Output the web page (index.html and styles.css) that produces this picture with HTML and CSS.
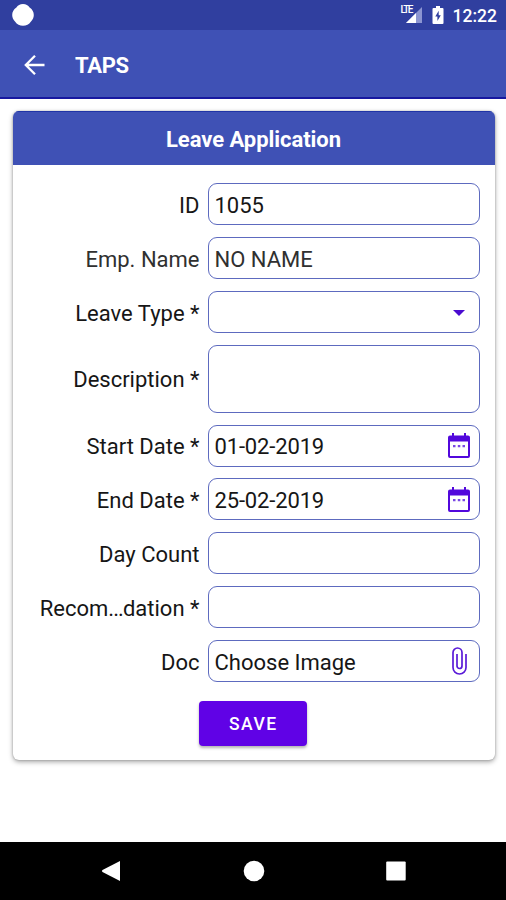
FILE: index.html
```html
<!DOCTYPE html>
<html lang="en">
<head>
<meta charset="utf-8">
<title>TAPS</title>
<link rel="stylesheet" href="styles.css">
</head>
<body>
<div class="status">
  <svg class="notif" viewBox="0 0 24 24"><path d="M12 1C15 1 17.200 2.300 18.600 4.500C21.500 6.500 22.800 9 22.800 12C22.800 14.500 21.800 16.800 20 18.500C18 21.500 15.300 22.800 12 22.800S6 21.500 4 18.500C2.200 16.800 1.200 14.500 1.200 12C1.200 9 2.500 6.500 5.400 4.500C6.800 2.300 9 1 12 1Z" fill="#fff"/></svg>
  <div class="indicators">
    <span class="signal"><span class="lte">LTE</span><svg viewBox="0 0 16 16"><path d="M16 0V16H0Z" fill="#8c95d1"/><path d="M10 6V16H0Z" fill="#fff"/></svg></span>
    <svg class="battery" viewBox="0 0 12 18"><path d="M4 0H8V2H10.500Q11.500 2 11.500 3V17Q11.500 18 10.500 18H1.500Q.5 18 .5 17V3Q.5 2 1.500 2H4Z" fill="#fff"/><path d="M6.700 4.800L3.300 10.500H5.400V15L8.800 9.300H6.700Z" fill="#303f9f"/></svg>
    <span class="clock">12:22</span>
  </div>
</div>
<header class="appbar">
  <svg class="back" viewBox="0 0 22 22"><path d="M20.500 11H2M11 1.800L1.800 11L11 20.200" fill="none" stroke="#fff" stroke-width="2.300"/></svg>
  <h1>TAPS</h1>
</header>
<main>
  <section class="card">
    <h2>Leave Application</h2>
    <form class="form">
      <div class="row"><label>ID</label><div class="field">1055</div></div>
      <div class="row soft"><label>Emp. Name</label><div class="field">NO NAME</div></div>
      <div class="row"><label>Leave Type *</label><div class="field"><svg class="caret" viewBox="0 0 12 6"><path d="M0 0H12L6 6Z" fill="#4a0bd0"/></svg></div></div>
      <div class="row tall"><label>Description *</label><div class="field"></div></div>
      <div class="row"><label>Start Date *</label><div class="field date">01-02-2019<svg class="cal" viewBox="0 0 22 25"><path d="M4 0H6V2.500H16V0H18V2.500H20Q22 2.500 22 4.500V23Q22 25 20 25H2Q0 25 0 23V4.500Q0 2.500 2 2.500H4ZM2 8.500V23H20V8.500Z" fill="#5208dc" fill-rule="evenodd"/><path d="M5 12H7.500V14.200H5ZM9.800 12H12.300V14.200H9.800ZM14.500 12H17V14.200H14.500Z" fill="#7a48e4"/></svg></div></div>
      <div class="row"><label>End Date *</label><div class="field date">25-02-2019<svg class="cal" viewBox="0 0 22 25"><path d="M4 0H6V2.500H16V0H18V2.500H20Q22 2.500 22 4.500V23Q22 25 20 25H2Q0 25 0 23V4.500Q0 2.500 2 2.500H4ZM2 8.500V23H20V8.500Z" fill="#5208dc" fill-rule="evenodd"/><path d="M5 12H7.500V14.200H5ZM9.800 12H12.300V14.200H9.800ZM14.500 12H17V14.200H14.500Z" fill="#7a48e4"/></svg></div></div>
      <div class="row"><label>Day Count</label><div class="field"></div></div>
      <div class="row"><label>Recom<span class="dots">...</span>dation *</label><div class="field"></div></div>
      <div class="row"><label>Doc</label><div class="field">Choose Image<svg class="clip" viewBox="0 0 15 28"><path d="M14 7V20.500A6.500 6.500 0 0 1 1 20.500V5.500A4.500 4.500 0 0 1 10 5.500V19A2.500 2.500 0 0 1 5 19V7" fill="none" stroke="#5a1bd8" stroke-width="1.700"/></svg></div></div>
      <button type="button" class="save">SAVE</button>
    </form>
  </section>
</main>
<nav class="navbar">
  <svg viewBox="0 0 22 22"><path d="M20 1V21L2.500 12Q1.200 11 2.500 10Z" fill="#fff"/></svg>
  <svg viewBox="0 0 22 22"><circle cx="11" cy="11" r="10.300" fill="#fff"/></svg>
  <svg viewBox="0 0 22 22"><rect x="1.200" y="1.600" width="19.500" height="19" rx="1" fill="#fff"/></svg>
</nav>
</body>
</html>
```
FILE: styles.css
```css
* { box-sizing: border-box; }
body {
  margin: 0;
  height: 900px;
  display: flex;
  flex-direction: column;
  background: #fff;
  color: #161616;
  font-family: Roboto, "Liberation Sans", sans-serif;
}
svg { display: block; flex: none; }
.status {
  height: 30px;
  padding: 0 9px 0 11px;
  display: flex;
  align-items: center;
  justify-content: space-between;
  background: #303f9f;
  color: #fff;
}
.notif { width: 24px; height: 24px; }
.indicators { display: flex; align-items: center; }
.signal { position: relative; margin-right: 10px; }
.signal svg { width: 16px; height: 16px; }
.lte {
  position: absolute;
  left: -5px;
  top: -2px;
  font-size: 10px;
  line-height: 10px;
  font-weight: 500;
  letter-spacing: -1.500px;
}
.battery { width: 12px; height: 18px; margin-right: 9px; }
.clock { font-size: 17.500px; font-weight: 500; line-height: 30px; padding-top: 2px; }
.appbar {
  height: 69px;
  padding: 2px 0 0 24px;
  display: flex;
  align-items: center;
  gap: 29px;
  background: #3f51b5;
  border-bottom: 2px solid #1718a0;
  color: #fff;
}
.back { width: 22px; height: 22px; }
h1 { margin: 0; padding-top: 2px; font-size: 22px; font-weight: 700; letter-spacing: -0.300px; }
main { flex: 1; padding: 12px 11.5px 0 12.5px; }
.card {
  height: 648.5px;
  border-radius: 6px;
  overflow: hidden;
  background: #fff;
  box-shadow: 0 2px 5px rgba(0,0,0,.35), 0 0 2px rgba(0,0,0,.25);
}
h2 {
  margin: 0;
  height: 53.5px;
  display: flex;
  align-items: center;
  justify-content: center;
  padding-top: 3px;
  background: #3f51b5;
  border-top: 1px solid #2034a6;
  color: #fff;
  font-size: 22px;
  font-weight: 700;
  letter-spacing: -0.050px;
}
.form {
  padding: 18.900px 14.500px 0 0;
  display: flex;
  flex-direction: column;
  gap: 11.900px;
}
.row {
  height: 42px;
  display: grid;
  grid-template-columns: 187px 1fr;
  column-gap: 8px;
  align-items: center;
  font-size: 22px;
  line-height: 28px;
}
.tall { height: 67.600px; }
.row label { text-align: right; white-space: nowrap; padding-top: 3px; }
.dots { letter-spacing: -0.900px; }
.field {
  height: 100%;
  display: flex;
  align-items: center;
  justify-content: space-between;
  padding: 3px 9px 0 6px;
  border: 1.500px solid #5d6abf;
  border-radius: 9px;
  white-space: nowrap;
}
.date { letter-spacing: -0.150px; }
.soft { color: #303030; }
.caret { width: 12px; height: 6px; margin: -2px 5px 0 auto; }
.cal { width: 22px; height: 25px; margin-top: -3px; }
.clip { width: 15px; height: 28px; margin: -3px 3px 0 0; }
.save {
  align-self: center;
  width: 108px;
  height: 45px;
  margin: 7px 0 0 13px;
  padding: 1px 0 0 1px;
  border: 0;
  border-radius: 4px;
  background: #6002e6;
  color: #fff;
  font: 500 17.500px Roboto, sans-serif;
  letter-spacing: 1.500px;
  box-shadow: 0 2px 3px rgba(0,0,0,.3);
}
.navbar {
  height: 58px;
  padding: 0 99px 0 100px;
  display: flex;
  align-items: center;
  justify-content: space-between;
  background: #000;
}
.navbar svg { width: 22px; height: 22px; }
```
